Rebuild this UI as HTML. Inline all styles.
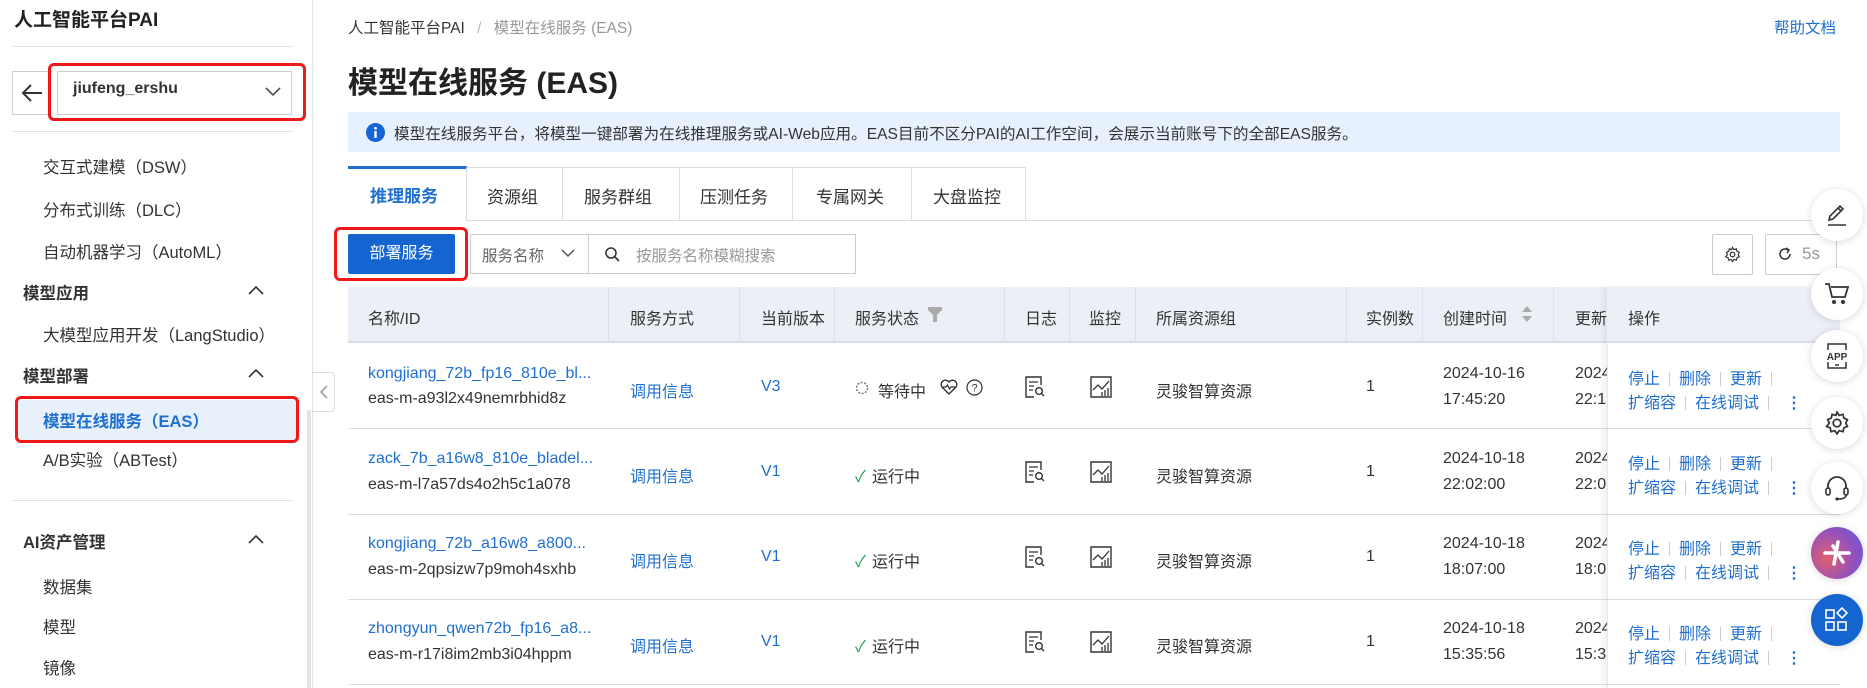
<!DOCTYPE html>
<html><head><meta charset="utf-8">
<style>
*{box-sizing:border-box;margin:0;padding:0}
body{width:1867px;height:688px;overflow:hidden;background:#fff;font-family:"Liberation Sans","Noto Sans CJK SC",sans-serif;color:#333;position:relative;font-size:16px}
.a{position:absolute;white-space:nowrap}
.blue{color:#1f6fd0}
.hl{position:absolute;height:1px;background:#e3e3e3}
.vl{position:absolute;width:1px;background:#d8e2ef}
.red{position:absolute;border:3px solid #f01818;border-radius:6px}
.circ{position:absolute;width:52px;height:52px;border-radius:50%;background:#fff;box-shadow:0 1px 8px rgba(0,0,0,.15);left:1811px;display:flex;align-items:center;justify-content:center}
.sep{display:inline-block;width:1px;height:14px;background:#ccc;margin:0 9px;vertical-align:-2px}
.sb{font-size:16.5px}
</style></head><body>
<!-- sidebar -->
<div class="a" style="left:0;top:0;width:313px;height:688px;border-right:1px solid #e5e5e5"></div>
<div class="a" style="left:14px;top:5px;font-size:19px;font-weight:bold;color:#222">人工智能平台PAI</div>
<div class="hl" style="left:12px;top:46px;width:281px"></div>
<div class="a" style="left:12px;top:71px;width:40px;height:44px;border:1px solid #ccc;border-right:none"></div>
<svg class="a" style="left:20px;top:82px" width="24" height="22" viewBox="0 0 24 22"><path d="M22 11H3M11 3L3 11l8 8" stroke="#333" stroke-width="2" fill="none"/></svg>
<div class="a" style="left:57px;top:71px;width:235px;height:44px;border:1px solid #ccc"></div>
<div class="a" style="left:73px;top:80px;font-size:16px;font-weight:bold;color:#333">jiufeng_ershu</div>
<svg class="a" style="left:265px;top:87px" width="16" height="10"><path d="M1 1l7 7 7-7" stroke="#555" stroke-width="1.6" fill="none"/></svg>
<div class="red" style="left:48px;top:63px;width:258px;height:58px"></div>
<div class="hl" style="left:12px;top:131px;width:281px"></div>
<div class="a sb" style="left:43px;top:154px">交互式建模（DSW）</div>
<div class="a sb" style="left:43px;top:197px">分布式训练（DLC）</div>
<div class="a sb" style="left:43px;top:239px">自动机器学习（AutoML）</div>
<div class="a sb" style="left:23px;top:280px;font-weight:bold">模型应用</div>
<svg class="a" style="left:248px;top:285px" width="16" height="10"><path d="M1 9l7-7 7 7" stroke="#333" stroke-width="1.6" fill="none"/></svg>
<div class="a sb" style="left:43px;top:322px">大模型应用开发（LangStudio）</div>
<div class="a sb" style="left:23px;top:363px;font-weight:bold">模型部署</div>
<svg class="a" style="left:248px;top:368px" width="16" height="10"><path d="M1 9l7-7 7 7" stroke="#333" stroke-width="1.6" fill="none"/></svg>
<div class="a" style="left:17px;top:400px;width:280px;height:40px;background:#e8f0fc"></div>
<div class="a sb" style="left:43px;top:408px;font-weight:bold;color:#1f6fd0">模型在线服务（EAS）</div>
<div class="red" style="left:15px;top:396px;width:284px;height:47px"></div>
<div class="a sb" style="left:43px;top:447px">A/B实验（ABTest）</div>
<div class="hl" style="left:12px;top:500px;width:281px"></div>
<div class="a sb" style="left:23px;top:529px;font-weight:bold">AI资产管理</div>
<svg class="a" style="left:248px;top:534px" width="16" height="10"><path d="M1 9l7-7 7 7" stroke="#333" stroke-width="1.6" fill="none"/></svg>
<div class="a sb" style="left:43px;top:574px">数据集</div>
<div class="a sb" style="left:43px;top:614px">模型</div>
<div class="a sb" style="left:43px;top:655px">镜像</div>
<div class="a" style="left:307px;top:410px;width:4px;height:278px;background:#e4e4e4"></div>
<div class="a" style="left:313px;top:372px;width:22px;height:40px;background:#fff;border:1px solid #ddd;border-left:none;border-radius:0 4px 4px 0"></div>
<svg class="a" style="left:319px;top:385px" width="10" height="14"><path d="M8 1L2 7l6 6" stroke="#999" stroke-width="1.5" fill="none"/></svg>

<!-- main -->
<div class="a" style="left:348px;top:16px;font-size:15.5px;color:#333">人工智能平台PAI <span style="color:#bbb;margin:0 8px">/</span> <span style="color:#999">模型在线服务 (EAS)</span></div>
<div class="a blue" style="left:1774px;top:16px;font-size:15.5px">帮助文档</div>
<div class="a" style="left:348px;top:58px;font-size:30px;font-weight:bold;color:#222">模型在线服务 (EAS)</div>
<div class="a" style="left:348px;top:112px;width:1492px;height:40px;background:#e7f1fd"></div>
<svg class="a" style="left:366px;top:123px" width="19" height="19"><circle cx="9.5" cy="9.5" r="9.5" fill="#1565d8"/><rect x="8.3" y="8" width="2.4" height="7" fill="#fff"/><circle cx="9.5" cy="5.3" r="1.4" fill="#fff"/></svg>
<div class="a" style="left:394px;top:122px;font-size:15.6px">模型在线服务平台，将模型一键部署为在线推理服务或AI-Web应用。EAS目前不区分PAI的AI工作空间，会展示当前账号下的全部EAS服务。</div>
<!-- tabs -->
<div class="hl" style="left:348px;top:220px;width:1492px;background:#ddd"></div>
<div class="a" style="left:348px;top:167px;width:678px;height:54px;border:1px solid #ddd;border-bottom:none"></div>
<div class="a" style="left:348px;top:166px;width:119px;height:55px;border-top:3px solid #1f6fd0;background:#fff;border-right:1px solid #ddd"></div>
<div class="a" style="left:370px;top:182px;font-size:17px;font-weight:bold;color:#1f6fd0">推理服务</div>
<div class="vl" style="left:562px;top:167px;height:53px;background:#ddd"></div>
<div class="vl" style="left:679px;top:167px;height:53px;background:#ddd"></div>
<div class="vl" style="left:792px;top:167px;height:53px;background:#ddd"></div>
<div class="vl" style="left:911px;top:167px;height:53px;background:#ddd"></div>
<div class="a" style="left:487px;top:183px;font-size:17px">资源组</div>
<div class="a" style="left:584px;top:183px;font-size:17px">服务群组</div>
<div class="a" style="left:700px;top:183px;font-size:17px">压测任务</div>
<div class="a" style="left:816px;top:183px;font-size:17px">专属网关</div>
<div class="a" style="left:933px;top:183px;font-size:17px">大盘监控</div>
<!-- toolbar -->
<div class="a" style="left:348px;top:234px;width:107px;height:40px;background:#1565d0;border-radius:2px;color:#fff;font-size:16px;text-align:center;line-height:40px">部署服务</div>
<div class="red" style="left:334px;top:227px;width:134px;height:54px"></div>
<div class="a" style="left:470px;top:234px;width:386px;height:40px;border:1px solid #ccc"></div>
<div class="vl" style="left:588px;top:234px;height:40px;background:#ccc"></div>
<div class="a" style="left:482px;top:244px;font-size:15.5px;color:#666">服务名称</div>
<svg class="a" style="left:561px;top:249px" width="14" height="9"><path d="M1 1l6 6 6-6" stroke="#555" stroke-width="1.5" fill="none"/></svg>
<svg class="a" style="left:605px;top:247px" width="15" height="15"><circle cx="6" cy="6" r="5" stroke="#333" stroke-width="1.6" fill="none"/><path d="M10 10l4 4" stroke="#333" stroke-width="1.6"/></svg>
<div class="a" style="left:636px;top:244px;font-size:15.5px;color:#999">按服务名称模糊搜索</div>
<div class="a" style="left:1712px;top:234px;width:41px;height:41px;border:1px solid #ccc;border-radius:2px"></div>
<svg class="a" style="left:1724px;top:246px" width="17" height="17" viewBox="0 0 24 24"><circle cx="12" cy="12" r="3.2" fill="none" stroke="#333" stroke-width="1.8"/><path d="M12 2l2 3 3.5-1 .8 3.5 3.3 1.3-1.5 3.2 1.5 3.2-3.3 1.3-.8 3.5-3.5-1-2 3-2-3-3.5 1-.8-3.5-3.3-1.3L4.9 12 3.4 8.8l3.3-1.3.8-3.5 3.5 1z" fill="none" stroke="#333" stroke-width="1.6"/></svg>
<div class="a" style="left:1765px;top:234px;width:72px;height:41px;border:1px solid #ccc;border-radius:2px"></div>
<svg class="a" style="left:1778px;top:247px" width="14" height="14"><path d="M12 7a5 5 0 1 1-2-4" stroke="#333" stroke-width="1.5" fill="none"/><path d="M8 1l3 2-2 3" stroke="#333" stroke-width="1.5" fill="none"/></svg>
<div class="a" style="left:1802px;top:244px;font-size:17px;color:#999">5s</div>
<!-- table header -->
<div class="a" style="left:348px;top:287px;width:1492px;height:56px;background:#ecf0f6;border-bottom:2px solid #d9dde3"></div>
<div class="vl" style="left:608px;top:287px;height:56px"></div>
<div class="vl" style="left:739px;top:287px;height:56px"></div>
<div class="vl" style="left:834px;top:287px;height:56px"></div>
<div class="vl" style="left:1004px;top:287px;height:56px"></div>
<div class="vl" style="left:1069px;top:287px;height:56px"></div>
<div class="vl" style="left:1135px;top:287px;height:56px"></div>
<div class="vl" style="left:1346px;top:287px;height:56px"></div>
<div class="vl" style="left:1422px;top:287px;height:56px"></div>
<div class="vl" style="left:1553px;top:287px;height:56px"></div>
<div class="a" style="left:368px;top:305px">名称/ID</div>
<div class="a" style="left:630px;top:305px">服务方式</div>
<div class="a" style="left:761px;top:305px">当前版本</div>
<div class="a" style="left:855px;top:305px">服务状态</div>
<svg class="a" style="left:928px;top:307px" width="14" height="15"><path d="M0 0h14v3L9 8v7H5V8L0 3z" fill="#aaa"/></svg>
<div class="a" style="left:1025px;top:305px">日志</div>
<div class="a" style="left:1089px;top:305px">监控</div>
<div class="a" style="left:1156px;top:305px">所属资源组</div>
<div class="a" style="left:1366px;top:305px">实例数</div>
<div class="a" style="left:1443px;top:305px">创建时间</div>
<svg class="a" style="left:1521px;top:305px" width="12" height="18"><path d="M6 1l5 6H1z M6 17l5-6H1z" fill="#aaa"/></svg>
<div class="a" style="left:1575px;top:305px">更新时间</div>

<!-- rows -->
<div class="hl" style="left:348px;top:428px;width:1492px;background:#ddd"></div>
<div class="hl" style="left:348px;top:514px;width:1492px;background:#ddd"></div>
<div class="hl" style="left:348px;top:599px;width:1492px;background:#ddd"></div>
<div class="hl" style="left:348px;top:684px;width:1492px;background:#ddd"></div>

<!-- row 1 -->
<div class="a blue" style="left:368px;top:365px">kongjiang_72b_fp16_810e_bl...</div>
<div class="a" style="left:368px;top:390px">eas-m-a93l2x49nemrbhid8z</div>
<div class="a blue" style="left:630px;top:378px">调用信息</div>
<div class="a blue" style="left:761px;top:378px">V3</div>
<svg class="a" style="left:855px;top:381px" width="14" height="14"><circle cx="7" cy="7" r="5.5" fill="none" stroke="#777" stroke-width="1.5" stroke-dasharray="2 1.5"/></svg>
<div class="a" style="left:878px;top:378px">等待中</div>
<svg class="a" style="left:940px;top:379px" width="18" height="16" viewBox="0 0 18 16"><path d="M9 15L2 8a4 4 0 0 1 7-5 4 4 0 0 1 7 5z" fill="none" stroke="#333" stroke-width="1.4"/><path d="M3 8h3l1.5-2 2 4 1.5-2h4" fill="none" stroke="#333" stroke-width="1.2"/></svg>
<svg class="a" style="left:966px;top:379px" width="17" height="17"><circle cx="8.5" cy="8.5" r="7.5" fill="none" stroke="#333" stroke-width="1.2"/><text x="8.5" y="12.5" font-size="11" text-anchor="middle" fill="#333" font-family="Liberation Sans">?</text></svg>
<div class="a" style="left:1156px;top:378px">灵骏智算资源</div>
<div class="a" style="left:1366px;top:378px">1</div>
<div class="a" style="left:1443px;top:365px">2024-10-16</div>
<div class="a" style="left:1443px;top:391px">17:45:20</div>
<div class="a" style="left:1575px;top:365px">2024-10-18</div>
<div class="a" style="left:1575px;top:391px">22:13:00</div>
<!-- row 2 -->
<div class="a blue" style="left:368px;top:450px">zack_7b_a16w8_810e_bladel...</div>
<div class="a" style="left:368px;top:476px">eas-m-l7a57ds4o2h5c1a078</div>
<div class="a blue" style="left:630px;top:463px">调用信息</div>
<div class="a blue" style="left:761px;top:463px">V1</div>
<div class="a" style="left:855px;top:463px"><span style="color:#1e9e4a;margin-right:6px">✓</span>运行中</div>
<div class="a" style="left:1156px;top:463px">灵骏智算资源</div>
<div class="a" style="left:1366px;top:463px">1</div>
<div class="a" style="left:1443px;top:450px">2024-10-18</div>
<div class="a" style="left:1443px;top:476px">22:02:00</div>
<div class="a" style="left:1575px;top:450px">2024-10-18</div>
<div class="a" style="left:1575px;top:476px">22:02:00</div>
<!-- row 3 -->
<div class="a blue" style="left:368px;top:535px">kongjiang_72b_a16w8_a800...</div>
<div class="a" style="left:368px;top:561px">eas-m-2qpsizw7p9moh4sxhb</div>
<div class="a blue" style="left:630px;top:548px">调用信息</div>
<div class="a blue" style="left:761px;top:548px">V1</div>
<div class="a" style="left:855px;top:548px"><span style="color:#1e9e4a;margin-right:6px">✓</span>运行中</div>
<div class="a" style="left:1156px;top:548px">灵骏智算资源</div>
<div class="a" style="left:1366px;top:548px">1</div>
<div class="a" style="left:1443px;top:535px">2024-10-18</div>
<div class="a" style="left:1443px;top:561px">18:07:00</div>
<div class="a" style="left:1575px;top:535px">2024-10-18</div>
<div class="a" style="left:1575px;top:561px">18:07:00</div>
<!-- row 4 -->
<div class="a blue" style="left:368px;top:620px">zhongyun_qwen72b_fp16_a8...</div>
<div class="a" style="left:368px;top:646px">eas-m-r17i8im2mb3i04hppm</div>
<div class="a blue" style="left:630px;top:633px">调用信息</div>
<div class="a blue" style="left:761px;top:633px">V1</div>
<div class="a" style="left:855px;top:633px"><span style="color:#1e9e4a;margin-right:6px">✓</span>运行中</div>
<div class="a" style="left:1156px;top:633px">灵骏智算资源</div>
<div class="a" style="left:1366px;top:633px">1</div>
<div class="a" style="left:1443px;top:620px">2024-10-18</div>
<div class="a" style="left:1443px;top:646px">15:35:56</div>
<div class="a" style="left:1575px;top:620px">2024-10-18</div>
<div class="a" style="left:1575px;top:646px">15:35:56</div>

<!-- log/monitor icons -->
<svg class="a" style="left:1025px;top:376px" width="20" height="22" viewBox="0 0 20 22"><path d="M16 9V1H1v20h8" fill="none" stroke="#333" stroke-width="1.4"/><path d="M4 6h9M4 10h5M4 14h4" stroke="#333" stroke-width="1.3"/><circle cx="14" cy="15" r="3.3" fill="none" stroke="#333" stroke-width="1.4"/><path d="M16.4 17.4l2.6 2.6" stroke="#333" stroke-width="1.4"/></svg>
<svg class="a" style="left:1025px;top:461px" width="20" height="22" viewBox="0 0 20 22"><path d="M16 9V1H1v20h8" fill="none" stroke="#333" stroke-width="1.4"/><path d="M4 6h9M4 10h5M4 14h4" stroke="#333" stroke-width="1.3"/><circle cx="14" cy="15" r="3.3" fill="none" stroke="#333" stroke-width="1.4"/><path d="M16.4 17.4l2.6 2.6" stroke="#333" stroke-width="1.4"/></svg>
<svg class="a" style="left:1025px;top:546px" width="20" height="22" viewBox="0 0 20 22"><path d="M16 9V1H1v20h8" fill="none" stroke="#333" stroke-width="1.4"/><path d="M4 6h9M4 10h5M4 14h4" stroke="#333" stroke-width="1.3"/><circle cx="14" cy="15" r="3.3" fill="none" stroke="#333" stroke-width="1.4"/><path d="M16.4 17.4l2.6 2.6" stroke="#333" stroke-width="1.4"/></svg>
<svg class="a" style="left:1025px;top:631px" width="20" height="22" viewBox="0 0 20 22"><path d="M16 9V1H1v20h8" fill="none" stroke="#333" stroke-width="1.4"/><path d="M4 6h9M4 10h5M4 14h4" stroke="#333" stroke-width="1.3"/><circle cx="14" cy="15" r="3.3" fill="none" stroke="#333" stroke-width="1.4"/><path d="M16.4 17.4l2.6 2.6" stroke="#333" stroke-width="1.4"/></svg>
<svg class="a" style="left:1090px;top:376px" width="22" height="22" viewBox="0 0 22 22"><path d="M1 1v20h20V1z" fill="none" stroke="#333" stroke-width="1.4"/><path d="M3 14l5-5 4 4 7-8M12 20v-4M15 20v-6M18 20v-8" fill="none" stroke="#333" stroke-width="1.3"/></svg>
<svg class="a" style="left:1090px;top:461px" width="22" height="22" viewBox="0 0 22 22"><path d="M1 1v20h20V1z" fill="none" stroke="#333" stroke-width="1.4"/><path d="M3 14l5-5 4 4 7-8M12 20v-4M15 20v-6M18 20v-8" fill="none" stroke="#333" stroke-width="1.3"/></svg>
<svg class="a" style="left:1090px;top:546px" width="22" height="22" viewBox="0 0 22 22"><path d="M1 1v20h20V1z" fill="none" stroke="#333" stroke-width="1.4"/><path d="M3 14l5-5 4 4 7-8M12 20v-4M15 20v-6M18 20v-8" fill="none" stroke="#333" stroke-width="1.3"/></svg>
<svg class="a" style="left:1090px;top:631px" width="22" height="22" viewBox="0 0 22 22"><path d="M1 1v20h20V1z" fill="none" stroke="#333" stroke-width="1.4"/><path d="M3 14l5-5 4 4 7-8M12 20v-4M15 20v-6M18 20v-8" fill="none" stroke="#333" stroke-width="1.3"/></svg>

<!-- fixed op column -->
<div class="a" style="left:1607px;top:287px;width:233px;height:401px;background:#fff;box-shadow:-4px 0 6px rgba(0,0,0,.06);border-left:1px solid #e8e8e8"></div>
<div class="a" style="left:1607px;top:287px;width:233px;height:56px;background:#ecf0f6;border-bottom:2px solid #d9dde3"></div>
<div class="a" style="left:1628px;top:305px">操作</div>
<div class="hl" style="left:1607px;top:428px;width:233px;background:#ddd"></div>
<div class="hl" style="left:1607px;top:514px;width:233px;background:#ddd"></div>
<div class="hl" style="left:1607px;top:599px;width:233px;background:#ddd"></div>
<div class="hl" style="left:1607px;top:684px;width:233px;background:#ddd"></div>
<div class="a blue" style="left:1628px;top:365px">停止<span class="sep"></span>删除<span class="sep"></span>更新<span class="sep"></span></div>
<div class="a blue" style="left:1628px;top:389px">扩缩容<span class="sep"></span>在线调试<span class="sep"></span><b style="margin-left:8px">⋮</b></div>
<div class="a blue" style="left:1628px;top:450px">停止<span class="sep"></span>删除<span class="sep"></span>更新<span class="sep"></span></div>
<div class="a blue" style="left:1628px;top:474px">扩缩容<span class="sep"></span>在线调试<span class="sep"></span><b style="margin-left:8px">⋮</b></div>
<div class="a blue" style="left:1628px;top:535px">停止<span class="sep"></span>删除<span class="sep"></span>更新<span class="sep"></span></div>
<div class="a blue" style="left:1628px;top:559px">扩缩容<span class="sep"></span>在线调试<span class="sep"></span><b style="margin-left:8px">⋮</b></div>
<div class="a blue" style="left:1628px;top:620px">停止<span class="sep"></span>删除<span class="sep"></span>更新<span class="sep"></span></div>
<div class="a blue" style="left:1628px;top:644px">扩缩容<span class="sep"></span>在线调试<span class="sep"></span><b style="margin-left:8px">⋮</b></div>

<!-- floating circles -->
<div class="circ" style="top:189px"><svg width="24" height="24" viewBox="0 0 24 24"><path d="M4 17l1-4 10-10 3 3-10 10z M13 5l3 3" fill="none" stroke="#333" stroke-width="1.6"/><path d="M3 22h18" stroke="#333" stroke-width="1.6"/></svg></div>
<div class="circ" style="top:268px"><svg width="26" height="24" viewBox="0 0 26 24"><path d="M1 2h4l3 13h13l3-10H7" fill="none" stroke="#333" stroke-width="1.8"/><circle cx="10" cy="20" r="2" fill="#333"/><circle cx="19" cy="20" r="2" fill="#333"/></svg></div>
<div class="circ" style="top:330px"><svg width="26" height="28" viewBox="0 0 26 28"><path d="M4 8V2h18v6M4 20v6h18v-6" fill="none" stroke="#333" stroke-width="1.5"/><text x="13" y="18" font-size="10" font-weight="bold" text-anchor="middle" fill="#333" font-family="Liberation Sans">APP</text><path d="M11 23h4" stroke="#333" stroke-width="1.5"/></svg></div>
<div class="circ" style="top:397px"><svg width="26" height="26" viewBox="0 0 24 24"><circle cx="12" cy="12" r="3.5" fill="none" stroke="#333" stroke-width="1.6"/><path d="M12 2l2 3 3.5-1 .8 3.5 3.3 1.3-1.5 3.2 1.5 3.2-3.3 1.3-.8 3.5-3.5-1-2 3-2-3-3.5 1-.8-3.5-3.3-1.3L4.9 12 3.4 8.8l3.3-1.3.8-3.5 3.5 1z" fill="none" stroke="#333" stroke-width="1.6"/></svg></div>
<div class="circ" style="top:462px"><svg width="26" height="26" viewBox="0 0 26 26"><path d="M4 14v-3a9 9 0 0 1 18 0v3" fill="none" stroke="#333" stroke-width="1.8"/><rect x="2" y="13" width="4" height="7" rx="2" fill="none" stroke="#333" stroke-width="1.6"/><rect x="20" y="13" width="4" height="7" rx="2" fill="none" stroke="#333" stroke-width="1.6"/><path d="M22 20c0 3-4 4-8 4" fill="none" stroke="#333" stroke-width="1.6"/><circle cx="13" cy="24" r="1.6" fill="#333"/></svg></div>
<div class="circ" style="top:527px;background:radial-gradient(circle at 30% 60%,#e06070,#9050c0 60%,#5a60e0)"><svg width="30" height="30" viewBox="0 0 30 30"><path d="M3 15h24M16 4l-4 22M11 8l10 16" stroke="#fff" stroke-width="3.5" stroke-linecap="round"/></svg></div>
<div class="circ" style="top:594px;background:#1565d0"><svg width="26" height="26" viewBox="0 0 26 26"><rect x="2" y="3" width="8" height="8" fill="none" stroke="#fff" stroke-width="1.6"/><rect x="2" y="15" width="8" height="8" fill="none" stroke="#fff" stroke-width="1.6"/><rect x="14" y="15" width="8" height="8" fill="none" stroke="#fff" stroke-width="1.6"/><path d="M18 1l5 5-5 5-5-5z" fill="none" stroke="#fff" stroke-width="1.6"/></svg></div>
</body></html>
